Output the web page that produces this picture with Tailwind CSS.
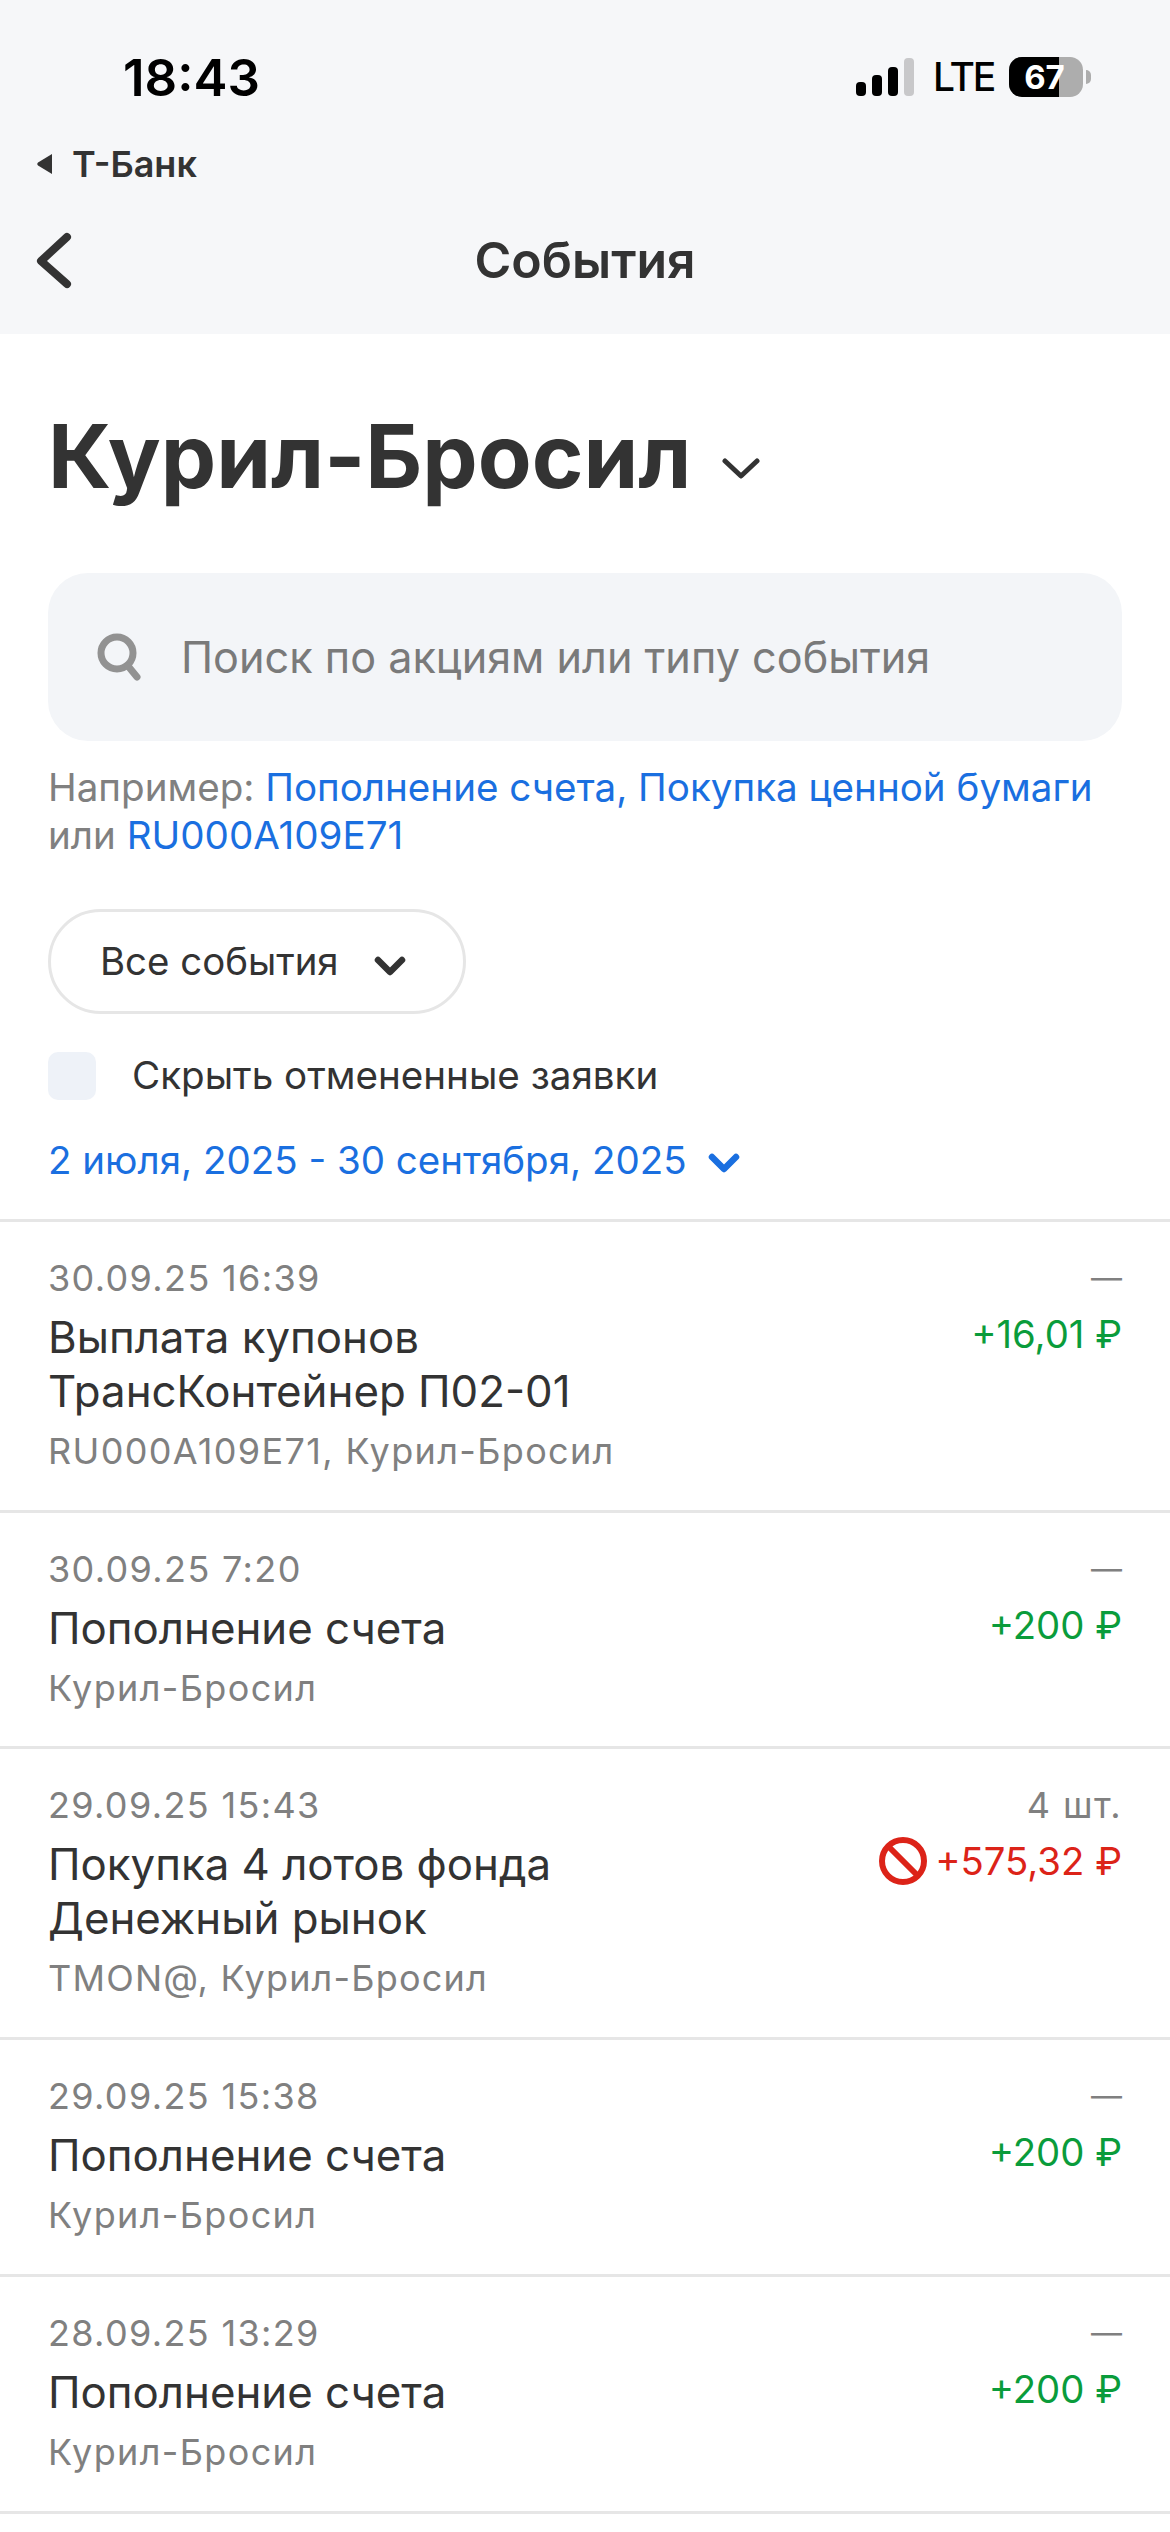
<!DOCTYPE html>
<html lang="ru">
  <head>
    <meta charset="utf-8" />
    <meta name="viewport" content="width=device-width, initial-scale=1.0" />
    <title>События</title>
    <script src="https://cdn.jsdelivr.net/npm/@tailwindcss/browser@4"></script>
  </head>
  <body class="bg-white font-['Inter',sans-serif] text-[#333333] w-[1170px] h-[2532px] overflow-hidden">
    <!-- Status bar + nav -->
    <header class="bg-[#f6f7f9] h-[334px] flex flex-col">
      <div class="h-[134px] pl-[123px] pr-[79px] flex items-start justify-between">
        <span class="mt-[48px] text-[51px] leading-[60px] font-semibold text-black">18:43</span>
        <div class="mt-[57px] flex items-center">
          <svg width="58" height="38" viewBox="0 0 58 38">
            <rect x="0" y="24" width="10" height="14" rx="4" fill="#000" />
            <rect x="16" y="17" width="10" height="21" rx="4" fill="#000" />
            <rect x="32" y="9" width="10" height="29" rx="4" fill="#000" />
            <rect x="48" y="0" width="10" height="38" rx="4" fill="#c8c8ca" />
          </svg>
          <span class="ml-[19px] w-[57px] text-[39px] leading-[40px] tracking-[-2px] font-medium text-black">LTE</span>
          <div class="relative ml-[19px] w-[74px] h-[40px] rounded-[13px] bg-[#adadad] overflow-hidden">
            <div class="h-full w-[50px] bg-black"></div>
            <span class="absolute left-0 right-0 top-0 pr-[3px] text-center text-[33px] leading-[40px] font-bold text-white">67</span>
          </div>
          <div class="ml-[3px] w-[5px] h-[14px] rounded-r-full bg-[#adadad]"></div>
        </div>
      </div>
      <div class="h-[60px] pl-[36px] flex items-center gap-[18px]">
        <svg width="18" height="22" viewBox="0 0 18 22"><path d="M16 1v20L2 12.5a2 2 0 0 1 0-3z" fill="#333" /></svg>
        <span class="text-[36px] leading-[40px] font-semibold">Т-Банк</span>
      </div>
      <div class="relative flex-1 flex items-start justify-center">
        <svg class="absolute left-[36px] top-[34px]" width="38" height="66" viewBox="0 0 38 66" fill="none">
          <path d="M31 9 5 33l26 23" stroke="#333" stroke-width="8" stroke-linecap="round" stroke-linejoin="round" />
        </svg>
        <span class="mt-[38px] text-[50px] leading-[56px] font-semibold">События</span>
      </div>
    </header>

    <section class="px-[48px]">
      <div class="mt-[72px] h-[100px] flex items-center gap-[31px]">
        <h1 class="text-[88px] leading-[100px] font-bold">Курил-Бросил</h1>
        <svg class="mt-[26px]" width="38" height="22" viewBox="0 0 38 22" fill="none">
          <path d="M3 3l16 15L35 3" stroke="#333" stroke-width="5" stroke-linecap="round" stroke-linejoin="round" />
        </svg>
      </div>

      <div class="mt-[67px] h-[168px] rounded-[40px] bg-[#f3f5f8] pl-[48px] flex items-center gap-[39px]">
        <svg width="46" height="50" viewBox="0 0 46 50" fill="none">
          <circle cx="21" cy="21" r="16" stroke="#929292" stroke-width="7" />
          <path d="M32 34l9 11" stroke="#929292" stroke-width="7" stroke-linecap="round" />
        </svg>
        <span class="text-[43.2px] leading-[54px] text-[#7a7a7a]">Поиск по акциям или типу события</span>
      </div>

      <p class="mt-[22px] text-[38.6px] leading-[48px] text-[#808080]">Например: <span class="text-[#1a6fe0]">Пополнение счета, Покупка ценной бумаги</span><br />или <span class="text-[#1a6fe0]">RU000A109E71</span></p>

      <div class="mt-[50px] w-[418px] h-[105px] rounded-full border-[3px] border-[#e6e6e6] pl-[49px] flex items-center gap-[35px]">
        <span class="pb-[2px] text-[38.4px] leading-[48px]">Все события</span>
        <svg class="mt-[8px]" width="32" height="24" viewBox="0 0 32 24" fill="none">
          <path d="M4 6l12 12L28 6" stroke="#333" stroke-width="6.5" stroke-linecap="round" stroke-linejoin="round" />
        </svg>
      </div>

      <div class="mt-[38px] h-[48px] flex items-center gap-[36px]">
        <div class="w-[48px] h-[48px] rounded-[10px] bg-[#eef2f8]"></div>
        <span class="pb-[3px] text-[38.6px] leading-[48px]">Скрыть отмененные заявки</span>
      </div>

      <div class="mt-[36px] h-[48px] flex items-center gap-[21px]">
        <span class="text-[38.5px] leading-[48px] text-[#1a6fe0]">2 июля, 2025 - 30 сентября, 2025</span>
        <svg class="mt-[6px]" width="32" height="24" viewBox="0 0 32 24" fill="none">
          <path d="M4 6l12 12L28 6" stroke="#1a6fe0" stroke-width="6.5" stroke-linecap="round" stroke-linejoin="round" />
        </svg>
      </div>
    </section>

    <ul class="mt-[35px] border-t-[3px] border-[#e6e6e6]">
      <li class="h-[291px] border-b-[3px] border-[#e6e6e6] px-[48px] pt-[34px] flex justify-between">
        <div>
          <p class="text-[36px] leading-[44px] tracking-[1.35px] text-[#808080]">30.09.25 16:39</p>
          <p class="mt-[11px] text-[43.8px] leading-[54px]">Выплата купонов<br />ТрансКонтейнер П02-01</p>
          <p class="mt-[10px] text-[36px] leading-[44px] tracking-[1.35px] text-[#808080]">RU000A109E71, Курил-Бросил</p>
        </div>
        <div class="text-right">
          <p class="text-[31px] leading-[44px] text-[#808080]">—</p>
          <p class="mt-[10px] text-[38.3px] leading-[48px] text-[#0a9c3b]">+16,01 ₽</p>
        </div>
      </li>
      <li class="h-[236px] border-b-[3px] border-[#e6e6e6] px-[48px] pt-[34px] flex justify-between">
        <div>
          <p class="text-[36px] leading-[44px] tracking-[1.35px] text-[#808080]">30.09.25 7:20</p>
          <p class="mt-[11px] text-[43.8px] leading-[54px]">Пополнение счета</p>
          <p class="mt-[10px] text-[36px] leading-[44px] tracking-[1.35px] text-[#808080]">Курил-Бросил</p>
        </div>
        <div class="text-right">
          <p class="text-[31px] leading-[44px] text-[#808080]">—</p>
          <p class="mt-[10px] text-[38.3px] leading-[48px] text-[#0a9c3b]">+200 ₽</p>
        </div>
      </li>
      <li class="h-[291px] border-b-[3px] border-[#e6e6e6] px-[48px] pt-[34px] flex justify-between">
        <div>
          <p class="text-[36px] leading-[44px] tracking-[1.35px] text-[#808080]">29.09.25 15:43</p>
          <p class="mt-[11px] text-[43.8px] leading-[54px]">Покупка 4 лотов фонда<br />Денежный рынок</p>
          <p class="mt-[10px] text-[36px] leading-[44px] tracking-[1.2px] text-[#808080]">TMON@, Курил-Бросил</p>
        </div>
        <div class="flex flex-col items-end">
          <p class="text-[36px] leading-[44px] tracking-[1.5px] text-[#808080]">4 шт.</p>
          <div class="mt-[10px] flex items-center gap-[8px]">
            <svg width="48" height="48" viewBox="0 0 48 48" fill="none">
              <circle cx="24" cy="24" r="21" stroke="#dc2318" stroke-width="6" />
              <path d="M9 9l30 30" stroke="#dc2318" stroke-width="6" />
            </svg>
            <p class="text-[38.3px] leading-[48px] text-[#dc2318]">+575,32 ₽</p>
          </div>
        </div>
      </li>
      <li class="h-[237px] border-b-[3px] border-[#e6e6e6] px-[48px] pt-[34px] flex justify-between">
        <div>
          <p class="text-[36px] leading-[44px] tracking-[1.35px] text-[#808080]">29.09.25 15:38</p>
          <p class="mt-[11px] text-[43.8px] leading-[54px]">Пополнение счета</p>
          <p class="mt-[10px] text-[36px] leading-[44px] tracking-[1.35px] text-[#808080]">Курил-Бросил</p>
        </div>
        <div class="text-right">
          <p class="text-[31px] leading-[44px] text-[#808080]">—</p>
          <p class="mt-[10px] text-[38.3px] leading-[48px] text-[#0a9c3b]">+200 ₽</p>
        </div>
      </li>
      <li class="h-[237px] border-b-[3px] border-[#e6e6e6] px-[48px] pt-[34px] flex justify-between">
        <div>
          <p class="text-[36px] leading-[44px] tracking-[1.35px] text-[#808080]">28.09.25 13:29</p>
          <p class="mt-[11px] text-[43.8px] leading-[54px]">Пополнение счета</p>
          <p class="mt-[10px] text-[36px] leading-[44px] tracking-[1.35px] text-[#808080]">Курил-Бросил</p>
        </div>
        <div class="text-right">
          <p class="text-[31px] leading-[44px] text-[#808080]">—</p>
          <p class="mt-[10px] text-[38.3px] leading-[48px] text-[#0a9c3b]">+200 ₽</p>
        </div>
      </li>
    </ul>
  </body>
</html>
